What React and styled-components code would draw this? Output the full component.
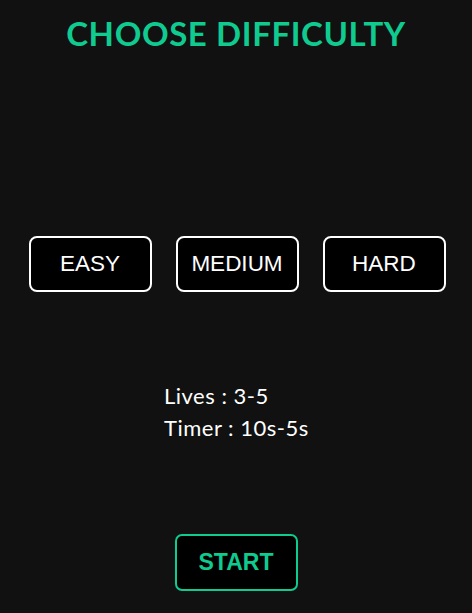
import React, { useState } from "react";
import styled, { createGlobalStyle } from "styled-components";

const GlobalStyle = createGlobalStyle`
  html, body {
    margin: 0;
    padding: 0;
    background: #111111;
  }
`;

const Page = styled.div`
  width: 472px;
  height: 613px;
  background: #111111;
  display: flex;
  flex-direction: column;
  align-items: center;
  box-sizing: border-box;
  padding-top: 14px;
`;

const Title = styled.h1`
  margin: 0;
  font-family: "Lato", sans-serif;
  font-weight: 700;
  font-size: 33px;
  line-height: 38px;
  color: #0fcb8f;
  letter-spacing: 0.6px;
`;

const Options = styled.div`
  display: flex;
  gap: 24px;
  margin-top: 184px;
  padding-left: 2px;
`;

const Choice = styled.button`
  width: 123px;
  height: 56px;
  box-sizing: border-box;
  background: #000;
  border: 2px solid #fff;
  border-radius: 8px;
  color: #fff;
  font-family: "Liberation Sans", Arial, sans-serif;
  font-size: 22.5px;
  cursor: pointer;
  padding: 0;
`;

const Info = styled.div`
  margin-top: 88px;
  width: 144px;
  white-space: nowrap;
  font-family: "Lato", sans-serif;
  font-size: 22px;
  letter-spacing: 0.5px;
  line-height: 32px;
  color: #fff;
`;

const Start = styled.button`
  margin-top: 90px;
  width: 123px;
  height: 57px;
  box-sizing: border-box;
  background: #000;
  border: 2px solid #0fcb8f;
  border-radius: 7px;
  color: #0fcb8f;
  font-family: "Liberation Sans", Arial, sans-serif;
  font-weight: 700;
  font-size: 23px;
  cursor: pointer;
  padding: 0;
`;

const levels = [
  { name: "EASY", lives: "3-5", timer: "10s-5s" },
  { name: "MEDIUM", lives: "2-4", timer: "8s-4s" },
  { name: "HARD", lives: "1-3", timer: "6s-3s" },
];

export default function App() {
  const [level, setLevel] = useState(0);
  const cur = levels[level];
  return (
    <>
      <GlobalStyle />
      <Page>
        <Title>CHOOSE DIFFICULTY</Title>
        <Options>
          {levels.map((l, i) => (
            <Choice key={l.name} onClick={() => setLevel(i)}>
              {l.name}
            </Choice>
          ))}
        </Options>
        <Info>
          <div>Lives : {cur.lives}</div>
          <div>Timer : {cur.timer}</div>
        </Info>
        <Start>START</Start>
      </Page>
    </>
  );
}
